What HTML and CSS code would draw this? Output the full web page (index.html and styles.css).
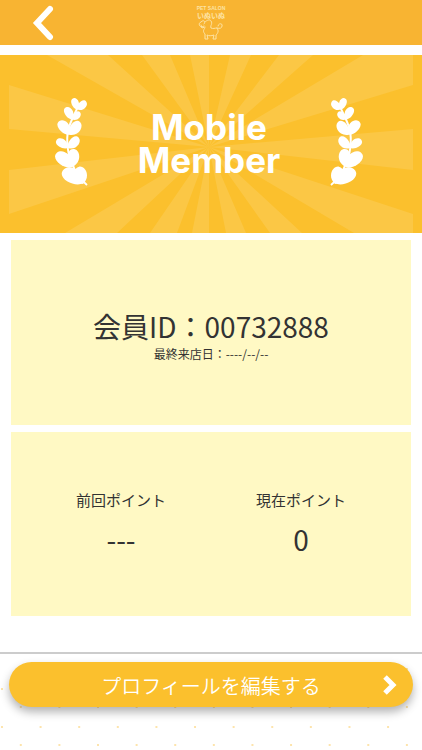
FILE: index.html
```html
<!DOCTYPE html>
<html lang="ja">
<head>
<meta charset="utf-8">
<meta name="viewport" content="width=device-width, initial-scale=1">
<title>会員証</title>
<link rel="stylesheet" href="styles.css">
</head>
<body>
<header class="header">
  <button class="back" type="button" aria-label="戻る">
    <svg width="22" height="36" viewBox="0 0 22 36"><path d="M18 4 5 18 18 32" fill="none" stroke="#fff" stroke-width="6" stroke-linecap="round"/></svg>
  </button>
  <div class="brand">
    <span class="brand-small">PET SALON</span>
    <span class="brand-name">いぬいぬ</span>
    <svg width="28" height="22" viewBox="0 0 28 22" fill="none" stroke="currentColor" stroke-width="1" stroke-linejoin="round" stroke-linecap="round">
      <path d="M5 8C2 8 1 4 4 3C7 0 9 3 7 5M5 8L7 7M4 6L5 9L8 8M8 3C10 1 13 0 14 2C16 5 13 6 14 9C16 10 18 9 20 9C22 12 21 14 19 16L19 20L16 20L17 16C14 17 12 17 10 16L11 20L8 20L8 15C6 13 6 11 8 9M20 9C23 10 25 9 25 7C26 4 21 4 21 7"/>
    </svg>
  </div>
</header>
<main class="main">
  <section class="banner">
    <svg class="rays" viewBox="0 0 422 178" preserveAspectRatio="none" aria-hidden="true">
      <path fill="#fbc745" d="M209 92 9 30V74ZM209 92 9 115V159ZM209 92 47 0H108ZM209 92 142 0H170ZM209 92 190 0H209ZM209 92 230 0H251ZM209 92 279 0H313ZM209 92 363 0H413V30ZM209 92 413 74V115ZM209 92 413 159V178H354ZM209 92 270 178H302ZM209 92 226 178H246ZM209 92 192 178H209ZM209 92 150 178H177ZM209 92 65 178H117Z"/>
    </svg>
    <div class="banner-content">
      <svg class="laurel" viewBox="25 18 105 270" aria-hidden="true">
        <defs><path id="leaf" d="M0 0C-36 -14 -58 -98 -12 -102C26 -104 50 -35 0 0Z"/></defs>
        <g id="branch" fill="#fff">
          <path d="M124 285C105 270 88 245 78 218C62 182 61 132 72 106C78 88 87 72 96 52" fill="none" stroke="#fff" stroke-width="6"/>
          <use href="#leaf" transform="translate(93 58) rotate(-9) scale(.34)"/>
          <use href="#leaf" transform="translate(93 58) rotate(58) scale(.36)"/>
          <use href="#leaf" transform="translate(78 88) rotate(-18) scale(.39)"/>
          <use href="#leaf" transform="translate(78 88) rotate(58) scale(.32)"/>
          <use href="#leaf" transform="translate(70 134) rotate(-28) scale(.49)"/>
          <use href="#leaf" transform="translate(70 134) rotate(48) scale(.49)"/>
          <use href="#leaf" transform="translate(66 174) rotate(-46) scale(.4)"/>
          <use href="#leaf" transform="translate(66 174) rotate(54) scale(.44)"/>
          <use href="#leaf" transform="translate(77 232) rotate(-38) scale(.6)"/>
          <use href="#leaf" transform="translate(77 232) rotate(16) scale(.54)"/>
          <use href="#leaf" transform="translate(112 280) rotate(-50) scale(.7)"/>
          <use href="#leaf" transform="translate(112 282) rotate(-6) scale(.52)"/>
        </g>
      </svg>
      <h1 class="banner-title">Mobile<br>Member</h1>
      <svg class="laurel flip" viewBox="25 18 105 270" aria-hidden="true"><use href="#branch"/></svg>
    </div>
  </section>
  <section class="card">
    <p class="member-id">会員ID：00732888</p>
    <p class="last-visit">最終来店日：----/--/--</p>
  </section>
  <section class="card">
    <dl class="points">
      <div><dt>前回ポイント</dt><dd>---</dd></div>
      <div><dt>現在ポイント</dt><dd>0</dd></div>
    </dl>
  </section>
</main>
<footer class="footer">
  <button class="edit" type="button">
    <span>プロフィールを編集する</span>
    <svg width="14" height="20" viewBox="0 0 14 20"><path d="M2 2 10 10 2 18" fill="none" stroke="#fff" stroke-width="5"/></svg>
  </button>
</footer>
</body>
</html>
```

FILE: styles.css
```css
* { box-sizing: border-box; margin: 0; padding: 0; }

body {
  display: flex;
  flex-direction: column;
  min-height: 100vh;
  background: #fff;
  color: #333;
  font-family: "Noto Sans CJK JP", sans-serif;
}

button { border: 0; font: inherit; cursor: pointer; }

.header {
  display: grid;
  grid-template-columns: 1fr auto 1fr;
  align-items: center;
  height: 45px;
  background: #f8b432;
}

.back {
  display: flex;
  justify-self: start;
  margin-left: 32px;
  background: none;
}

.brand {
  display: flex;
  flex-direction: column;
  align-items: center;
  color: #fde3a4;
}

.brand-small { font: 700 5px/6px "Liberation Sans", sans-serif; }
.brand-name { font-size: 7px; line-height: 8px; font-weight: 700; }

.main {
  display: flex;
  flex: 1;
  flex-direction: column;
  gap: 7px;
  padding: 10px 0 36px;
}

.banner {
  display: grid;
  height: 178px;
  background: #fbc02d;
}

.rays, .banner-content { grid-area: 1 / 1; }
.rays { width: 100%; height: 178px; }

.banner-content {
  display: flex;
  align-items: center;
  justify-content: space-between;
  padding: 0 58px 6px 54px;
}

.laurel { width: 35px; height: 90px; }
.flip { transform: scaleX(-1); }

.banner-title {
  padding-top: 6px;
  color: #fff;
  font: 700 35px/33px Inter, sans-serif;
  text-align: center;
}

.card {
  display: flex;
  flex: 1 1 0;
  flex-direction: column;
  justify-content: center;
  margin: 0 11px;
  background: #fff9c4;
  text-align: center;
}

.member-id { font-size: 28px; line-height: 36px; padding-top: 8px; }
.last-visit { font-size: 12px; line-height: 20px; }

.points {
  display: grid;
  grid-template-columns: 1fr 1fr;
  padding: 0 20px;
}

.points dt { font-size: 15px; line-height: 24px; }
.points dd { padding-top: 6px; font-size: 28px; line-height: 42px; }

.footer {
  padding: 8px 9px 43px;
  border-top: 2px solid #ccc;
  background:
    radial-gradient(circle at 2px 35px, #fde4ac 1px, transparent 1px) 0 0 / 9.15% 38px,
    radial-gradient(circle at 21px 15px, #fde4ac 1px, transparent 1px) 0 0 / 9.15% 38px,
    #fff;
}

.edit {
  display: grid;
  grid-template-columns: 1fr auto 1fr;
  align-items: center;
  width: 100%;
  height: 45px;
  padding: 0 16px;
  border-radius: 23px;
  background: #fbc02d;
  box-shadow: 0 5px 10px rgba(0, 0, 0, .3);
  color: #fff;
  font-size: 20px;
  font-weight: 350;
}

.edit span { grid-column: 2; padding-top: 2px; }
.edit svg { justify-self: end; }
```
